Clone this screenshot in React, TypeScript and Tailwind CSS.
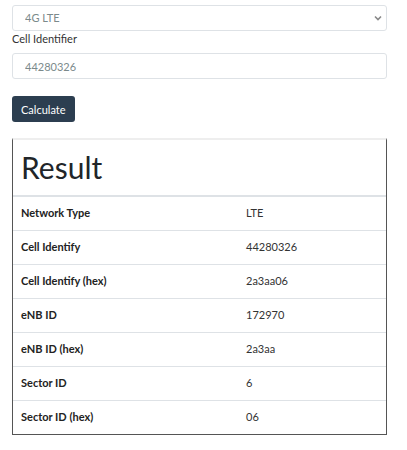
import { useState } from "react";

const rows: [string, string][] = [
  ["Network Type", "LTE"],
  ["Cell Identify", "44280326"],
  ["Cell Identify (hex)", "2a3aa06"],
  ["eNB ID", "172970"],
  ["eNB ID (hex)", "2a3aa"],
  ["Sector ID", "6"],
  ["Sector ID (hex)", "06"],
];

export default function App() {
  const [network, setNetwork] = useState("4G LTE");
  const [cellId, setCellId] = useState("");

  return (
    <div className="min-h-[450px] bg-white font-['Lato','Liberation_Sans',sans-serif] text-[11px] text-[#333]">
      <div className="w-[375px] ml-3 pt-[5px]">
        <div className="relative">
          <select
            value={network}
            onChange={(e) => setNetwork(e.target.value)}
            className="appearance-none w-full h-[26px] rounded-[3px] border border-[#dee2e6] bg-white px-3 text-[11px] text-[#7b8a8b] outline-none"
          >
            <option>4G LTE</option>
            <option>3G UMTS</option>
            <option>2G GSM</option>
          </select>
          <svg
            className="pointer-events-none absolute right-[5px] top-[10px]"
            width="8"
            height="6"
            viewBox="0 0 8 6"
            fill="none"
          >
            <path d="M1 1.5L4 4.5L7 1.5" stroke="#888" strokeWidth="1.6" />
          </svg>
        </div>

        <label className="block leading-[16px] text-[#333]">Cell Identifier</label>

        <input
          type="text"
          value={cellId}
          onChange={(e) => setCellId(e.target.value)}
          placeholder="44280326"
          className="mt-[6px] w-full h-[26px] rounded-[3px] border border-[#dee2e6] bg-white px-3 text-[11px] text-[#333] placeholder:text-[#7b8a8b] outline-none"
        />

        <button
          type="button"
          className="mt-[17px] h-[26px] px-[9px] rounded-[3px] bg-[#2c3e50] text-white text-[11px] leading-none"
        >
          Calculate
        </button>

        <div className="mt-[16px] border-x border-b border-[#555] border-t-2 border-t-[#eeeeee]">
          <div className="h-[55px] flex items-center px-2 text-[30px] font-normal text-[#212529] leading-none pb-[2px]">
            Result
          </div>
          <table className="w-full border-collapse table-fixed">
            <tbody>
              {rows.map(([label, value], i) => (
                <tr
                  key={label}
                  className={i === 0 ? "border-t-2 border-[#dee2e6]" : "border-t border-[#dee2e6]"}
                >
                  <td className="w-[225px] h-[34px] px-2 font-bold text-[#222]">{label}</td>
                  <td className="h-[34px] px-2 text-[#333]">{value}</td>
                </tr>
              ))}
            </tbody>
          </table>
        </div>
      </div>
    </div>
  );
}
